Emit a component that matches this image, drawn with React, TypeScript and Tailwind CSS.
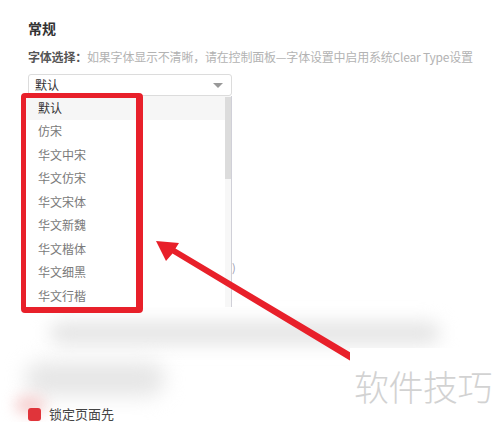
const fonts = ["默认", "仿宋", "华文中宋", "华文仿宋", "华文宋体", "华文新魏", "华文楷体", "华文细黑", "华文行楷"];

const App = () => {
  return (
    <div
      className="relative w-[500px] h-[422px] overflow-hidden bg-white"
      style={{ fontFamily: '"Noto Sans CJK SC", "Noto Sans", sans-serif' }}
    >
      {/* blurred leftovers of the screenshot */}
      <div className="absolute left-[50px] top-[322px] w-[390px] h-[22px] rounded-full bg-[#e4e4e4] blur-[9px]" />
      <div className="absolute left-[25px] top-[362px] w-[140px] h-[34px] rounded-full bg-[#e6e6e6] blur-[10px]" />
      <div className="absolute left-[15px] top-[396px] w-[30px] h-[18px] rounded-full bg-[#f6d0d0] blur-[7px]" />

      {/* settings content */}
      <section className="relative pl-[28px] pt-[18px] flex flex-col items-start">
        <h2 className="text-[14px] leading-[20px] font-bold text-[#333]">常规</h2>
        <p className="mt-[11px] text-[12px] leading-[16px] whitespace-nowrap text-[#b3b3b3] tracking-[-0.2px]">
          <span className="font-bold text-[#555]">字体选择：</span>
          如果字体显示不清晰，请在控制面板—字体设置中启用系统Clear Type设置
        </p>
        <div className="mt-[9px] w-[204px] h-[22px] border border-[#dcdcdc] rounded-[3px] flex items-center justify-between pl-[6px] pr-[8px]">
          <span className="text-[12px] text-[#333]">默认</span>
          <span className="w-0 h-0 border-l-[5px] border-r-[5px] border-t-[5px] border-l-transparent border-r-transparent border-t-[#999]" />
        </div>
        <div className="mt-[164px] ml-[204px] text-[11px] leading-[14px] text-[#9a9ab0]">)</div>
        <label className="mt-[132px] flex items-center gap-[8px]">
          <span className="w-[13px] h-[13px] rounded-[3px] bg-[#e0343a]" />
          <span className="text-[13px] leading-[16px] text-[#444]">锁定页面先</span>
        </label>
      </section>

      {/* dropdown list */}
      <div className="absolute left-[26px] top-[96px] w-[206px] h-[211px] bg-white border-r border-[#d0d0d8] flex">
        <ul className="flex-1">
          {fonts.map((f, i) => (
            <li
              key={f}
              className={`h-[23.5px] flex items-center pl-[12px] text-[12px] ${
                i === 0 ? "bg-[#f6f6f6] text-[#333]" : "text-[#7a7a7a]"
              }`}
            >
              {f}
            </li>
          ))}
        </ul>
        <div className="w-[6px] bg-[#f7f7f7]">
          <div className="mt-[1px] h-[82px] bg-[#dcdcdc]" />
        </div>
      </div>

      {/* red highlight box */}
      <div className="absolute left-[21px] top-[93px] w-[122px] h-[220px] border-[5px] border-r-[7px] border-b-[6px] border-[#e8202a] rounded-[4px]" />

      {/* arrow */}
      <svg className="absolute inset-0" width="500" height="422" viewBox="0 0 500 422">
        <polygon
          points="156,241 179,243 175.5,248.4 358,357 354,363 172.5,253.6 166,261"
          fill="#e8202a"
        />
      </svg>

      {/* watermark */}
      <div className="absolute left-[350px] top-[348px] w-[150px] h-[60px] bg-white flex items-end pl-[4px] pb-[2px]">
        <span className="text-[35px] leading-[40px] font-light text-[#d2d2d2] tracking-[-0.5px]">软件技巧</span>
      </div>
    </div>
  );
};

export default App;
